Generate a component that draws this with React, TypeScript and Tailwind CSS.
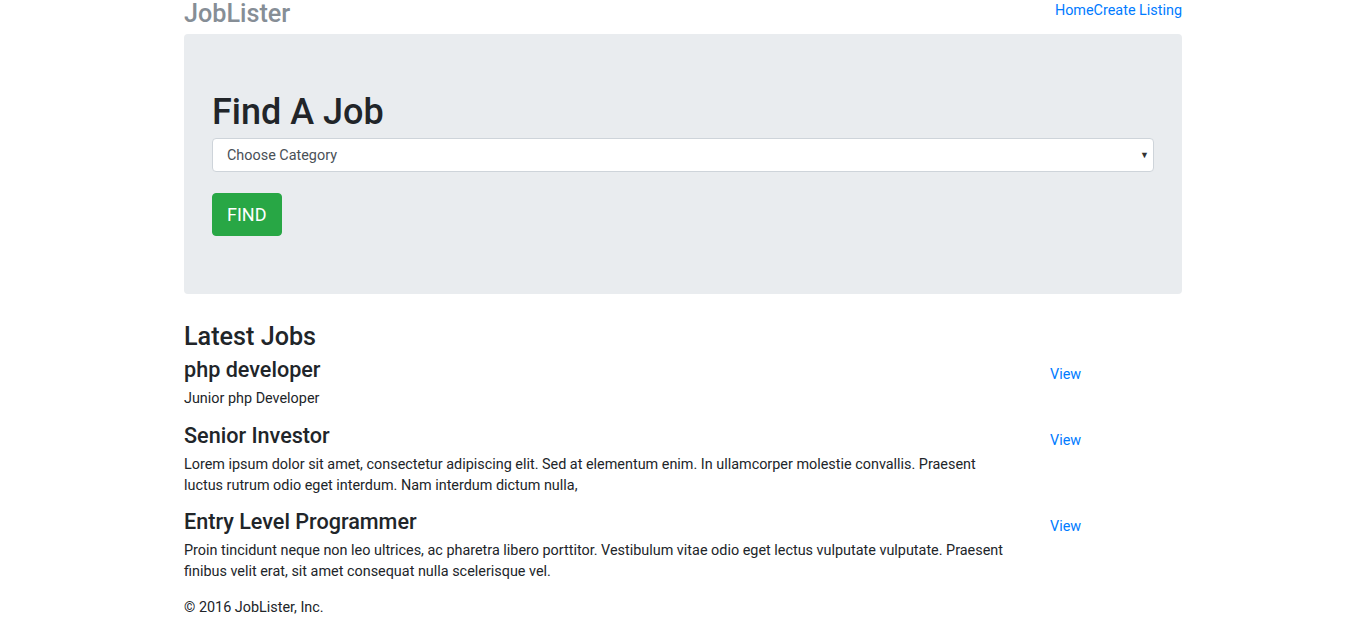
import React from "react";

const jobs = [
  {
    title: "php developer",
    text: "Junior php Developer",
  },
  {
    title: "Senior Investor",
    text: "Lorem ipsum dolor sit amet, consectetur adipiscing elit. Sed at elementum enim. In ullamcorper molestie convallis. Praesent luctus rutrum odio eget interdum. Nam interdum dictum nulla,",
  },
  {
    title: "Entry Level Programmer",
    text: "Proin tincidunt neque non leo ultrices, ac pharetra libero porttitor. Vestibulum vitae odio eget lectus vulputate vulputate. Praesent finibus velit erat, sit amet consequat nulla scelerisque vel.",
  },
];

export default function App() {
  return (
    <div className="min-h-screen bg-white text-[#212529] font-['Roboto',sans-serif]">
      <div className="mx-auto w-[998px]">
        <header className="flex justify-between items-start">
          <h3 className="text-[25.2px] leading-[28px] font-medium text-[#868e96]">JobLister</h3>
          <nav className="flex text-[14.4px] leading-[21.6px] text-[#007bff]">
            <a href="#">Home</a>
            <a href="#">Create Listing</a>
          </nav>
        </header>

        <div className="mt-[6px] bg-[#e9ecef] rounded-[4px] px-[28px] pt-[57px] pb-[58px]">
          <h1 className="text-[36px] leading-[43px] font-medium mb-[4px]">Find A Job</h1>
          <div className="relative">
            <select className="appearance-none w-full h-[34px] bg-white border border-[#ced4da] rounded-[4px] pl-[14px] pr-8 pt-[2px] text-[14.4px] text-[#495057] outline-none">
              <option>Choose Category</option>
            </select>
            <span className="absolute right-[5px] top-[9px] text-[9px] leading-[16px] text-[#333] pointer-events-none">▼</span>
          </div>
          <button className="mt-[21px] h-[43px] px-[14px] bg-[#28a745] border border-[#28a745] text-white text-[18px] rounded-[4px]">
            FIND
          </button>
        </div>

        <h3 className="mt-[28px] mb-[5px] text-[25.2px] leading-[30px] font-medium">Latest Jobs</h3>

        {jobs.map((job) => (
          <div key={job.title} className="flex">
            <div className="w-[828px] shrink-0">
              <h4 className="text-[21.6px] leading-[26px] font-medium mb-[5px]">{job.title}</h4>
              <p className="text-[14.4px] leading-[21px] mb-[13.5px]">{job.text}</p>
            </div>
            <div className="pl-[38px] pt-[5px]">
              <a href="#" className="text-[14.4px] leading-[21px] text-[#007bff]">View</a>
            </div>
          </div>
        ))}

        <footer className="pt-[1px] pb-[20px]">
          <p className="text-[14.4px] leading-[21px]">© 2016 JobLister, Inc.</p>
        </footer>
      </div>
    </div>
  );
}
